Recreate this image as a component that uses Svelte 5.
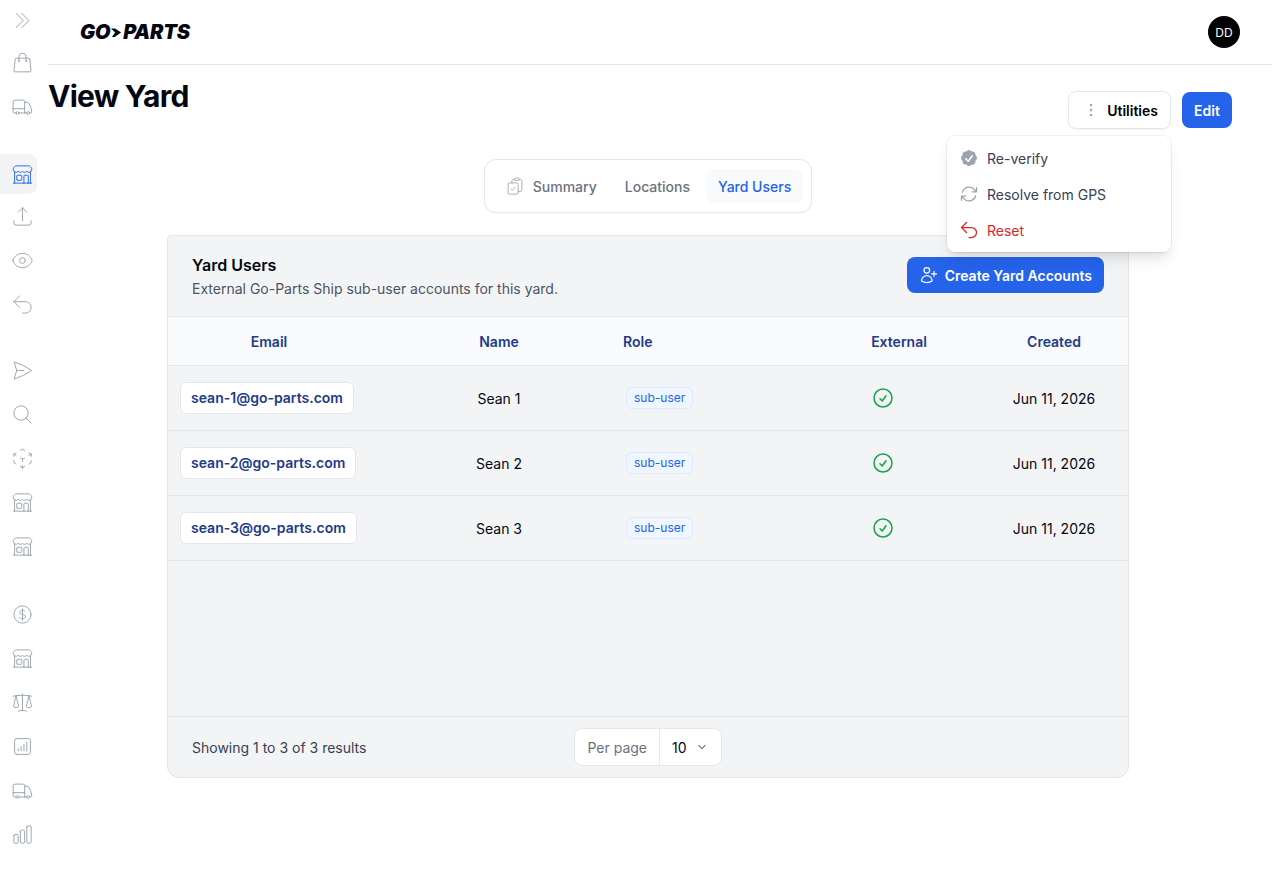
<script>
    const icons = {
        bag: "M15.75 10.5V6a3.75 3.75 0 1 0-7.5 0v4.5m11.356-1.993 1.263 12c.07.665-.45 1.243-1.119 1.243H4.25a1.125 1.125 0 0 1-1.12-1.243l1.264-12A1.125 1.125 0 0 1 5.513 7.5h12.974c.576 0 1.059.435 1.119 1.007ZM8.625 10.5a.375.375 0 1 1-.75 0 .375.375 0 0 1 .75 0Zm7.5 0a.375.375 0 1 1-.75 0 .375.375 0 0 1 .75 0Z",
        truck: "M8.25 18.75a1.5 1.5 0 0 1-3 0m3 0a1.5 1.5 0 0 0-3 0m3 0h6m-9 0H3.375a1.125 1.125 0 0 1-1.125-1.125V14.25m17.25 4.5a1.5 1.5 0 0 1-3 0m3 0a1.5 1.5 0 0 0-3 0m3 0h1.125c.621 0 1.129-.504 1.09-1.124a17.902 17.902 0 0 0-3.213-9.193 2.056 2.056 0 0 0-1.58-.86H14.25M16.5 18.75h-2.25m0-11.177v-.958c0-.568-.422-1.048-.987-1.106a48.554 48.554 0 0 0-10.026 0 1.106 1.106 0 0 0-.987 1.106v7.635m12-6.677v6.677m0 4.5v-4.5m0 0h-12",
        store: "M13.5 21v-7.5a.75.75 0 0 1 .75-.75h3a.75.75 0 0 1 .75.75V21m-4.5 0H2.36m11.14 0H18m0 0h3.64m-1.39 0V9.349M3.75 21V9.349m0 0a3.001 3.001 0 0 0 3.75-.615A2.993 2.993 0 0 0 9.75 9.75c.896 0 1.7-.393 2.25-1.016a2.993 2.993 0 0 0 2.25 1.016c.896 0 1.7-.393 2.25-1.015a3.001 3.001 0 0 0 3.75.614m-16.5 0a3.004 3.004 0 0 1-.621-4.72l1.189-1.19A1.5 1.5 0 0 1 5.378 3h13.243a1.5 1.5 0 0 1 1.06.44l1.19 1.189a3 3 0 0 1-.621 4.72M6.75 18h3.75a.75.75 0 0 0 .75-.75V13.5a.75.75 0 0 0-.75-.75H6.75a.75.75 0 0 0-.75.75v3.75c0 .414.336.75.75.75Z",
        tray: "M3 16.5v2.25A2.25 2.25 0 0 0 5.25 21h13.5A2.25 2.25 0 0 0 21 18.75V16.5m-13.5-9L12 3m0 0 4.5 4.5M12 3v13.5",
        eye: "M2.036 12.322a1.012 1.012 0 0 1 0-.639C3.423 7.51 7.36 4.5 12 4.5c4.638 0 8.573 3.007 9.963 7.178.07.207.07.431 0 .639C20.577 16.49 16.64 19.5 12 19.5c-4.638 0-8.573-3.007-9.963-7.178ZM15 12a3 3 0 1 1-6 0 3 3 0 0 1 6 0Z",
        uturn: "M9 15 3 9m0 0 6-6M3 9h12a6 6 0 0 1 0 12h-3",
        plane: "M6 12 3.269 3.125A59.769 59.769 0 0 1 21.485 12 59.768 59.768 0 0 1 3.27 20.875L5.999 12Zm0 0h7.5",
        search: "m21 21-5.197-5.197m0 0A7.5 7.5 0 1 0 5.196 5.196a7.5 7.5 0 0 0 10.607 10.607Z",
        cube: "m21 7.5-2.25-1.313M21 7.5v2.25m0-2.25-2.25 1.313M3 7.5l2.25-1.313M3 7.5l2.25 1.313M3 7.5v2.25m9 3 2.25-1.313M12 12.75l-2.25-1.313M12 12.75V15m0 6.75 2.25-1.313M12 21.75V19.5m0 2.25-2.25-1.313m0-16.875L12 2.25l2.25 1.313M21 14.25v2.25l-2.25 1.313m-13.5 0L3 16.5v-2.25",
        dollar: "M12 6v12m-3-2.818.879.659c1.171.879 3.07.879 4.242 0 1.172-.879 1.172-2.303 0-3.182C13.536 12.219 12.768 12 12 12c-.725 0-1.45-.22-2.003-.659-1.106-.879-1.106-2.303 0-3.182s2.9-.879 4.006 0l.415.33M21 12a9 9 0 1 1-18 0 9 9 0 0 1 18 0Z",
        scale: "M12 3v17.25m0 0c-1.472 0-2.882.265-4.185.75M12 20.25c1.472 0 2.882.265 4.185.75M18.75 4.97A48.416 48.416 0 0 0 12 4.5c-2.291 0-4.545.16-6.75.47m13.5 0c1.01.143 2.01.317 3 .52m-3-.52 2.62 10.726c.122.499-.106 1.028-.589 1.202a5.988 5.988 0 0 1-2.031.352 5.988 5.988 0 0 1-2.031-.352c-.483-.174-.711-.703-.59-1.202L18.75 4.971Zm-16.5.52c.99-.203 1.99-.377 3-.52m0 0 2.62 10.726c.122.499-.106 1.028-.589 1.202a5.989 5.989 0 0 1-2.031.352 5.989 5.989 0 0 1-2.031-.352c-.483-.174-.711-.703-.59-1.202L5.25 4.971Z",
        chartSquare: "M7.5 14.25v2.25m3-4.5v4.5m3-6.75v6.75m3-9v9M6 20.25h12A2.25 2.25 0 0 0 20.25 18V6A2.25 2.25 0 0 0 18 3.75H6A2.25 2.25 0 0 0 3.75 6v12A2.25 2.25 0 0 0 6 20.25Z",
        chart: "M3 13.125C3 12.504 3.504 12 4.125 12h2.25c.621 0 1.125.504 1.125 1.125v6.75C7.5 20.496 6.996 21 6.375 21h-2.25A1.125 1.125 0 0 1 3 19.875v-6.75ZM9.75 8.625c0-.621.504-1.125 1.125-1.125h2.25c.621 0 1.125.504 1.125 1.125v11.25c0 .621-.504 1.125-1.125 1.125h-2.25a1.125 1.125 0 0 1-1.125-1.125V8.625ZM16.5 4.125c0-.621.504-1.125 1.125-1.125h2.25C20.496 3 21 3.504 21 4.125v15.75c0 .621-.504 1.125-1.125 1.125h-2.25a1.125 1.125 0 0 1-1.125-1.125V4.125Z",
        toggle: "m5.25 4.5 7.5 7.5-7.5 7.5m6-15 7.5 7.5-7.5 7.5",
        clipboard: "M11.35 3.836c-.065.21-.1.433-.1.664 0 .414.336.75.75.75h4.5a.75.75 0 0 0 .75-.75 2.25 2.25 0 0 0-.1-.664m-5.8 0A2.251 2.251 0 0 1 13.5 2.25H15c1.012 0 1.867.668 2.15 1.586m-5.8 0c-.376.023-.75.05-1.124.08C9.095 4.01 8.25 4.973 8.25 6.108V8.25m8.9-4.414c.376.023.75.05 1.124.08 1.131.094 1.976 1.057 1.976 2.192V16.5A2.25 2.25 0 0 1 18 18.75h-2.25m-7.5-10.5H4.875c-.621 0-1.125.504-1.125 1.125v11.25c0 .621.504 1.125 1.125 1.125h9.75c.621 0 1.125-.504 1.125-1.125V18.75m-7.5-10.5h6.375c.621 0 1.125.504 1.125 1.125v9.375m-8.25-3 1.5 1.5 3-3.75",
        refresh: "M16.023 9.348h4.992v-.001M2.985 19.644v-4.992m0 0h4.992m-4.993 0 3.181 3.183a8.25 8.25 0 0 0 13.803-3.7M4.031 9.865a8.25 8.25 0 0 1 13.803-3.7l3.181 3.182m0-4.991v4.99",
        userPlus: "M18 7.5v3m0 0v3m0-3h3m-3 0h-3m-2.25-4.125a3.375 3.375 0 1 1-6.75 0 3.375 3.375 0 0 1 6.75 0ZM3 19.235v-.11a6.375 6.375 0 0 1 12.75 0v.109A12.318 12.318 0 0 1 9.374 21c-2.331 0-4.512-.645-6.374-1.766Z",
        checkCircle: "M9 12.75 11.25 15 15 9.75M21 12a9 9 0 1 1-18 0 9 9 0 0 1 18 0Z",
        dots: "M12 6.75a.75.75 0 1 1 0-1.5.75.75 0 0 1 0 1.5ZM12 12.75a.75.75 0 1 1 0-1.5.75.75 0 0 1 0 1.5ZM12 18.75a.75.75 0 1 1 0-1.5.75.75 0 0 1 0 1.5Z",
    };

    // Sidebar is split in three groups with larger gaps between them
    const navGroups = [
        ["bag", "truck"],
        ["store", "tray", "eye", "uturn"],
        ["plane", "search", "cube", "store", "store"],
        ["dollar", "store", "scale", "chartSquare", "truck", "chart"],
    ];

    const users = [
        { email: "sean-1@go-parts.com", name: "Sean 1" },
        { email: "sean-2@go-parts.com", name: "Sean 2" },
        { email: "sean-3@go-parts.com", name: "Sean 3" },
    ];
</script>

<div class="shell">
    <nav class="sidebar">
        <button class="nav-item toggle" aria-label="Expand">
            <svg viewBox="0 0 24 24"><path d={icons.toggle} /></svg>
        </button>
        {#each navGroups as group, g}
            <div class="nav-group" class:first={g === 0}>
                {#each group as icon, i}
                    <button class="nav-item" class:active={g === 1 && i === 0} aria-label={icon}>
                        <svg viewBox="0 0 24 24"><path d={icons[icon]} /></svg>
                    </button>
                {/each}
            </div>
        {/each}
    </nav>

    <div class="main">
        <header class="topbar">
            <div class="logo">
                <span>GO</span>
                <svg viewBox="0 0 12 12" class="logo-mark"><path d="M0 1.5h4.5L11 6l-7 5H1l3.5-5z" /></svg>
                <span>PARTS</span>
            </div>
            <div class="avatar">DD</div>
        </header>

        <div class="content">
            <div class="page-head">
                <h1>View Yard</h1>
                <div class="actions">
                    <button class="utilities">
                        <svg viewBox="0 0 24 24"><path d={icons.dots} /></svg>
                        Utilities
                    </button>
                    <button class="edit">Edit</button>

                    <div class="menu">
                        <div class="menu-item">
                            <svg viewBox="0 0 20 20" class="solid">
                                <path fill-rule="evenodd" clip-rule="evenodd" d="M16.403 12.652a3 3 0 0 0 0-5.304 3 3 0 0 0-3.75-3.751 3 3 0 0 0-5.305 0 3 3 0 0 0-3.751 3.75 3 3 0 0 0 0 5.305 3 3 0 0 0 3.75 3.751 3 3 0 0 0 5.305 0 3 3 0 0 0 3.751-3.75Zm-2.546-4.46a.75.75 0 0 0-1.214-.883l-3.483 4.79-1.88-1.88a.75.75 0 1 0-1.06 1.061l2.5 2.5a.75.75 0 0 0 1.137-.089l4-5.5Z" />
                            </svg>
                            Re-verify
                        </div>
                        <div class="menu-item">
                            <svg viewBox="0 0 24 24"><path d={icons.refresh} /></svg>
                            Resolve from GPS
                        </div>
                        <div class="menu-item danger">
                            <svg viewBox="0 0 24 24"><path d={icons.uturn} /></svg>
                            Reset
                        </div>
                    </div>
                </div>
            </div>

            <div class="tabs">
                <div class="tab">
                    <svg viewBox="0 0 24 24"><path d={icons.clipboard} /></svg>
                    Summary
                </div>
                <div class="tab">Locations</div>
                <div class="tab current">Yard Users</div>
            </div>

            <section class="card">
                <div class="card-head">
                    <div>
                        <h2>Yard Users</h2>
                        <p>External Go-Parts Ship sub-user accounts for this yard.</p>
                    </div>
                    <button class="create">
                        <svg viewBox="0 0 24 24"><path d={icons.userPlus} /></svg>
                        Create Yard Accounts
                    </button>
                </div>

                <div class="table-wrap">
                    <table>
                        <colgroup>
                            <col style="width: 202px" />
                            <col style="width: 244px" />
                            <col style="width: 245px" />
                            <col style="width: 121px" />
                            <col style="width: 148px" />
                        </colgroup>
                        <thead>
                            <tr>
                                <th class="center">Email</th>
                                <th class="center name">Name</th>
                                <th class="role-head">Role</th>
                                <th class="center ext-head">External</th>
                                <th class="center">Created</th>
                            </tr>
                        </thead>
                        <tbody>
                            {#each users as user}
                                <tr>
                                    <td class="email"><span class="email-chip">{user.email}</span></td>
                                    <td class="center name">{user.name}</td>
                                    <td class="role"><span class="badge">sub-user</span></td>
                                    <td class="ext">
                                        <svg viewBox="0 0 24 24"><path d={icons.checkCircle} /></svg>
                                    </td>
                                    <td class="center">Jun 11, 2026</td>
                                </tr>
                            {/each}
                        </tbody>
                    </table>
                </div>

                <div class="card-foot">
                    <span class="results">Showing 1 to 3 of 3 results</span>
                    <div class="per-page">
                        <span class="per-label">Per page</span>
                        <span class="per-value">
                            10
                            <svg viewBox="0 0 20 20"><path d="m5.5 7.75 4.5 4.5 4.5-4.5" /></svg>
                        </span>
                    </div>
                </div>
            </section>
        </div>
    </div>
</div>

<style>
    :global(body) {
        background: #fff;
        font-family: Inter, "Liberation Sans", sans-serif;
        color: #030712;
    }

    button {
        font: inherit;
        border: 0;
        background: none;
        padding: 0;
    }

    svg {
        fill: none;
        stroke: currentColor;
        stroke-linecap: round;
        stroke-linejoin: round;
        flex-shrink: 0;
    }

    .shell {
        display: flex;
        width: 1272px;
        height: 880px;
    }

    .sidebar {
        width: 48px;
        flex-shrink: 0;
        display: flex;
        flex-direction: column;
    }

    .nav-group {
        display: flex;
        flex-direction: column;
        gap: 4px;
        margin-top: 28px;
    }

    .nav-group.first {
        margin-top: 2px;
    }

    .nav-group:nth-of-type(3) {
        margin-top: 26px;
    }

    .nav-item {
        width: 37px;
        height: 40px;
        display: flex;
        align-items: center;
        padding-left: 11px;
        box-sizing: border-box;
        color: #9ca3af;
        border-radius: 0 8px 8px 0;
    }

    .nav-item svg {
        width: 23px;
        height: 23px;
        stroke-width: 1;
    }

    .nav-item.active {
        background: #f3f4f6;
        color: #2563eb;
        margin-bottom: -2px;
    }

    .main {
        flex: 1;
        min-width: 0;
    }

    .topbar {
        height: 64px;
        border-bottom: 1px solid #e5e7eb;
        display: flex;
        align-items: center;
        justify-content: space-between;
        padding: 0 32px;
    }

    .logo {
        display: flex;
        align-items: center;
        font-size: 20px;
        font-weight: 900;
        font-style: italic;
        letter-spacing: -0.2px;
        color: #030712;
    }

    .logo-mark {
        width: 11px;
        height: 11px;
        fill: #030712;
        stroke: none;
        margin: 0 1px;
    }

    .avatar {
        width: 32px;
        height: 32px;
        border-radius: 50%;
        background: #000;
        color: #fff;
        font-size: 12px;
        display: flex;
        align-items: center;
        justify-content: center;
    }

    .content {
        width: 1200px;
    }

    .page-head {
        display: flex;
        justify-content: space-between;
        align-items: flex-start;
        padding-right: 16px;
    }

    h1 {
        margin: 13px 0 0;
        font-size: 30px;
        line-height: 36px;
        font-weight: 700;
        letter-spacing: -0.75px;
    }

    .actions {
        position: relative;
        display: flex;
        align-items: center;
        gap: 11px;
        margin-top: 26px;
    }

    .utilities {
        width: 103px;
        height: 38px;
        box-sizing: border-box;
        border: 1px solid #e5e7eb;
        border-radius: 8px;
        background: #fff;
        display: flex;
        align-items: center;
        justify-content: flex-end;
        gap: 6px;
        padding-right: 12px;
        font-size: 14px;
        font-weight: 600;
        box-shadow: 0 1px 2px rgba(0, 0, 0, 0.05);
    }

    .utilities svg {
        width: 20px;
        height: 20px;
        stroke-width: 1.5;
        color: #9ca3af;
    }

    .edit {
        width: 50px;
        height: 36px;
        border-radius: 8px;
        background: #2563eb;
        color: #fff;
        font-size: 14px;
        font-weight: 600;
    }

    .menu {
        position: absolute;
        top: 45px;
        right: 61px;
        width: 224px;
        box-sizing: border-box;
        padding: 4px 0;
        background: #fff;
        border-radius: 8px;
        box-shadow: 0 0 0 1px rgba(3, 7, 18, 0.05), 0 10px 15px -3px rgba(0, 0, 0, 0.1), 0 4px 6px -4px rgba(0, 0, 0, 0.1);
        z-index: 5;
    }

    .menu-item {
        height: 36px;
        display: flex;
        align-items: center;
        gap: 8px;
        padding-left: 12px;
        font-size: 14px;
        color: #374151;
    }

    .menu-item svg {
        width: 20px;
        height: 20px;
        stroke-width: 1.5;
        color: #9ca3af;
    }

    .menu-item svg.solid {
        fill: #9ca3af;
        stroke: none;
    }

    .menu-item.danger,
    .menu-item.danger svg {
        color: #dc2626;
    }

    .tabs {
        width: fit-content;
        margin: 30px auto 22px;
        height: 54px;
        box-sizing: border-box;
        padding: 9px 8px 9px 8px;
        display: flex;
        gap: 4px;
        background: #fff;
        border: 1px solid #e5e7eb;
        border-radius: 12px;
        box-shadow: 0 1px 2px rgba(0, 0, 0, 0.03);
    }

    .tab {
        display: flex;
        align-items: center;
        gap: 8px;
        padding: 0 12px;
        border-radius: 8px;
        font-size: 14px;
        font-weight: 500;
        color: #6b7280;
    }

    .tab svg {
        width: 20px;
        height: 20px;
        stroke-width: 1;
        color: #9ca3af;
    }

    .tab.current {
        background: #f9fafb;
        color: #2563eb;
    }

    .card {
        width: 962px;
        height: 543px;
        margin: 0 auto;
        box-sizing: border-box;
        display: flex;
        flex-direction: column;
        background: #f3f4f6;
        border: 1px solid #e5e7eb;
        border-radius: 4px 4px 12px 12px;
    }

    .card-head {
        height: 81px;
        box-sizing: border-box;
        padding: 0 24px;
        border-bottom: 1px solid #e5e7eb;
        display: flex;
        align-items: center;
        justify-content: space-between;
    }

    h2 {
        margin: 0;
        font-size: 16px;
        line-height: 24px;
        font-weight: 600;
    }

    .card-head p {
        margin: 2px 0 0;
        font-size: 14px;
        line-height: 20px;
        color: #4b5563;
    }

    .create {
        height: 36px;
        padding: 0 12px;
        margin-top: -2px;
        display: flex;
        align-items: center;
        gap: 6px;
        background: #2563eb;
        color: #fff;
        border-radius: 8px;
        font-size: 14px;
        font-weight: 600;
    }

    .create svg {
        width: 20px;
        height: 20px;
        stroke-width: 1.5;
    }

    .table-wrap {
        flex: 1;
    }

    table {
        width: 960px;
        table-layout: fixed;
        border-collapse: collapse;
        font-size: 14px;
    }

    th {
        height: 48px;
        padding: 0;
        background: #f9fafb;
        border-bottom: 1px solid #e5e7eb;
        font-weight: 600;
        color: #1e3a8a;
        text-align: left;
    }

    td {
        height: 64px;
        padding: 0;
        border-bottom: 1px solid #e5e7eb;
    }

    .center {
        text-align: center;
    }

    .name {
        padding-left: 14px;
    }

    .role-head {
        padding-left: 9px;
    }

    .ext-head {
        padding-right: 41px;
    }

    .email {
        padding-left: 12px;
    }

    .email-chip {
        display: inline-block;
        padding: 6px 10px;
        background: #fff;
        border: 1px solid #e5e7eb;
        border-radius: 6px;
        font-weight: 600;
        line-height: 18px;
        color: #1e3a8a;
        white-space: nowrap;
    }

    .role {
        padding-left: 12px;
    }

    .badge {
        display: inline-block;
        padding: 2px 7px;
        background: #eff6ff;
        border: 1px solid #dbeafe;
        border-radius: 6px;
        font-size: 12px;
        line-height: 16px;
        color: #2563eb;
    }

    .ext {
        padding-left: 12px;
    }

    .ext svg {
        display: block;
        width: 24px;
        height: 24px;
        stroke-width: 1.5;
        color: #16a34a;
    }

    .card-foot {
        height: 61px;
        box-sizing: border-box;
        border-top: 1px solid #e5e7eb;
        padding: 0 24px;
        display: grid;
        grid-template-columns: 1fr auto 1fr;
        align-items: center;
    }

    .results {
        font-size: 14px;
        color: #374151;
    }

    .per-page {
        height: 38px;
        box-sizing: border-box;
        display: flex;
        align-items: stretch;
        background: #fff;
        border: 1px solid #e5e7eb;
        border-radius: 8px;
        font-size: 14px;
    }

    .per-label {
        display: flex;
        align-items: center;
        padding: 0 12px;
        color: #6b7280;
        border-right: 1px solid #e5e7eb;
    }

    .per-value {
        display: flex;
        align-items: center;
        gap: 8px;
        padding: 0 12px;
    }

    .per-value svg {
        width: 14px;
        height: 14px;
        stroke-width: 1.6;
        color: #6b7280;
    }
</style>
